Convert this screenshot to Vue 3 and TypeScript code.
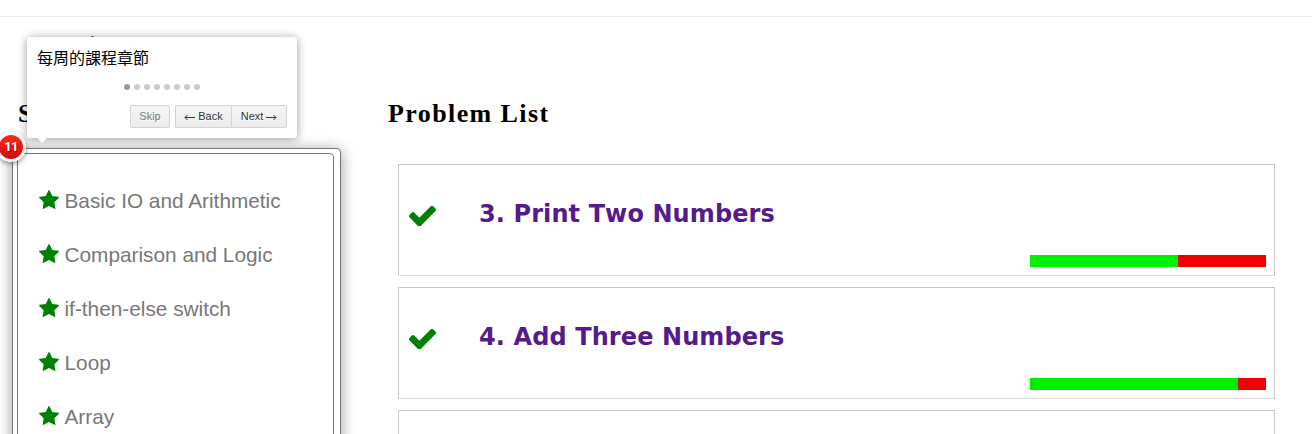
<script setup lang="ts">
interface Problem {
  title: string
  accepted: number
}

const chapters: string[] = [
  'Basic IO and Arithmetic',
  'Comparison and Logic',
  'if-then-else switch',
  'Loop',
  'Array',
]

const problems: Problem[] = [
  { title: '3. Print Two Numbers', accepted: 148 },
  { title: '4. Add Three Numbers', accepted: 208 },
]

const stepCount = 8
</script>

<template>
  <div class="page">
    <header class="topbar"></header>
    <main class="columns">
      <aside class="sidebar">
        <h2 class="heading">S</h2>
        <div class="highlight">
          <ul class="chapters">
            <li v-for="chapter in chapters" :key="chapter" class="chapter">
              <svg class="star" viewBox="0 0 1664 1587" preserveAspectRatio="none">
                <path d="M1664 615q0 22-26 48l-363 354 86 500q1 7 1 20 0 21-10.500 35.500t-30.500 14.500q-19 0-40-12l-449-236-449 236q-22 12-40 12-21 0-31.500-14.500t-10.500-35.500q0-6 2-20l86-500-364-354q-25-27-25-48 0-37 56-46l502-73 225-455q19-41 49-41t49 41l225 455 502 73q56 9 56 46z" />
              </svg>
              <span>{{ chapter }}</span>
            </li>
          </ul>
        </div>
      </aside>
      <section class="content">
        <h2 class="heading">Problem List</h2>
        <div class="cards">
          <article v-for="problem in problems" :key="problem.title" class="card">
            <div class="card-main">
              <svg class="check" viewBox="121 298 1550 1188" preserveAspectRatio="none">
                <path d="M1671 566q0 40-28 68l-724 724-136 136q-28 28-68 28t-68-28l-136-136-362-362q-28-28-28-68t28-68l136-136q28-28 68-28t68 28l294 295 656-657q28-28 68-28t68 28l136 136q28 28 28 68z" />
              </svg>
              <a class="title">{{ problem.title }}</a>
            </div>
            <div class="ratio">
              <div class="accepted" :style="{ width: problem.accepted + 'px' }"></div>
            </div>
          </article>
          <article class="card"></article>
        </div>
      </section>
    </main>

    <span class="speck"></span>
    <div class="tooltip">
      <p class="message">每周的課程章節</p>
      <div class="bullets">
        <i v-for="n in stepCount" :key="n" class="bullet" :class="{ active: n === 1 }"></i>
      </div>
      <div class="buttons">
        <a class="button skip">Skip</a>
        <a class="button back"><svg class="arrow" viewBox="0 0 11 7"><path d="M11 3.500H1M3.500 1L1 3.500L3.500 6" /></svg><span>Back</span></a>
        <a class="button next"><span>Next</span><svg class="arrow" viewBox="0 0 11 7"><path d="M0 3.500H10M7.500 1L10 3.500L7.500 6" /></svg></a>
      </div>
    </div>
    <span class="step">11</span>
  </div>
</template>

<style>
body {
  background: #fff;
  overflow: hidden;
}
</style>

<style scoped>
.page {
  position: relative;
  width: 1312px;
  height: 434px;
  overflow: hidden;
  background: #fff;
  font-family: "Liberation Sans", Arial, sans-serif;
}
.topbar {
  height: 16px;
  border-bottom: 1px solid #eee;
}
.columns {
  display: flex;
  padding-top: 81px;
}
.sidebar {
  width: 329px;
  margin-left: 12px;
}
.heading {
  margin: 0;
  height: 32px;
  font: bold 26px/32px "Liberation Serif", "Times New Roman", serif;
  letter-spacing: 1.4px;
  color: #000;
}
.sidebar .heading {
  padding-left: 6px;
}
.highlight {
  box-sizing: border-box;
  height: 400px;
  margin-top: 18px;
  padding: 4px 6px 0 4px;
  border: 1px solid #777;
  border-radius: 4px;
  background: #fff;
  box-shadow: 0 2px 15px rgba(0, 0, 0, 0.4);
}
.chapters {
  margin: 0;
  padding: 20px 0 0 21px;
  height: 400px;
  box-sizing: border-box;
  border: 1px solid #777;
  border-radius: 4px;
  list-style: none;
}
.chapter {
  display: flex;
  align-items: center;
  height: 54px;
  font-size: 20.8px;
  color: #777;
  white-space: nowrap;
}
.star {
  width: 20px;
  height: 19px;
  margin: 0 5.5px 3px 0;
  fill: #008000;
}
.content {
  margin-left: 47px;
}
.cards {
  display: flex;
  flex-direction: column;
  gap: 11px;
  margin: 34px 0 0 10px;
}
.card {
  box-sizing: border-box;
  width: 877px;
  height: 112px;
  border: 1px solid #c8c8c8;
  border-bottom-color: #dcdcdc;
}
.card-main {
  display: flex;
  align-items: flex-start;
  height: 90px;
  padding-left: 10px;
}
.check {
  width: 27px;
  height: 21px;
  margin-top: 40px;
  fill: #008000;
}
.title {
  margin: 34px 0 0 43px;
  font: bold 24px/30px "DejaVu Sans", Verdana, sans-serif;
  font-kerning: none;
  letter-spacing: 0.1px;
  color: #551a8b;
  white-space: nowrap;
}
.ratio {
  width: 236px;
  height: 12px;
  margin: 0 8px 0 auto;
  background: #f00000;
}
.accepted {
  height: 12px;
  background: #00f000;
}
.speck {
  position: absolute;
  left: 91px;
  top: 36px;
  width: 3px;
  height: 1px;
  background: #777;
}
.tooltip {
  position: absolute;
  left: 27px;
  top: 37px;
  box-sizing: border-box;
  width: 270px;
  height: 101px;
  padding: 9px 10px 10px;
  border-radius: 3px;
  background: #fff;
  box-shadow: 0 1px 10px rgba(0, 0, 0, 0.4);
}
.tooltip::after {
  content: "";
  position: absolute;
  left: 10px;
  top: 101px;
  border: 5px solid transparent;
  border-top-color: #fff;
}
.message {
  margin: 0;
  height: 24px;
  font: 16px/23px "Noto Sans CJK TC", sans-serif;
  color: #000;
}
.bullets {
  display: flex;
  justify-content: center;
  gap: 4px;
  margin-top: 14px;
}
.bullet {
  width: 6px;
  height: 6px;
  border-radius: 50%;
  background: #ccc;
}
.bullet.active {
  background: #999;
}
.buttons {
  display: flex;
  justify-content: flex-end;
  margin-top: 15px;
}
.button {
  display: flex;
  align-items: center;
  justify-content: center;
  gap: 3px;
  box-sizing: border-box;
  height: 23px;
  border: 1px solid #d4d4d4;
  border-radius: 2px;
  background: linear-gradient(#f4f4f4, #ececec);
  color: #333;
  font-size: 11px;
  line-height: 21px;
  text-shadow: 1px 1px 0 #fff;
}
.skip {
  width: 40px;
  margin-right: 5px;
  color: #7a7a7a;
}
.back {
  width: 56px;
  border-right: 0;
  border-radius: 2px 0 0 2px;
}
.next {
  width: 56px;
  border-radius: 0 2px 2px 0;
}
.arrow {
  width: 11px;
  height: 7px;
  margin-top: 2px;
  fill: none;
  stroke: #333;
  stroke-width: 1;
}
.step {
  position: absolute;
  left: -4px;
  top: 132px;
  box-sizing: border-box;
  width: 30px;
  height: 30px;
  border: 3px solid #fff;
  border-radius: 50%;
  background: linear-gradient(#ff3019, #cf0404) border-box;
  box-shadow: 0 2px 5px rgba(0, 0, 0, 0.4);
  color: #fff;
  font: bold 13px/24px Roboto, Arial, sans-serif;
  letter-spacing: -0.8px;
  text-align: center;
  text-shadow: 1px 1px 1px rgba(0, 0, 0, 0.3);
}
</style>
